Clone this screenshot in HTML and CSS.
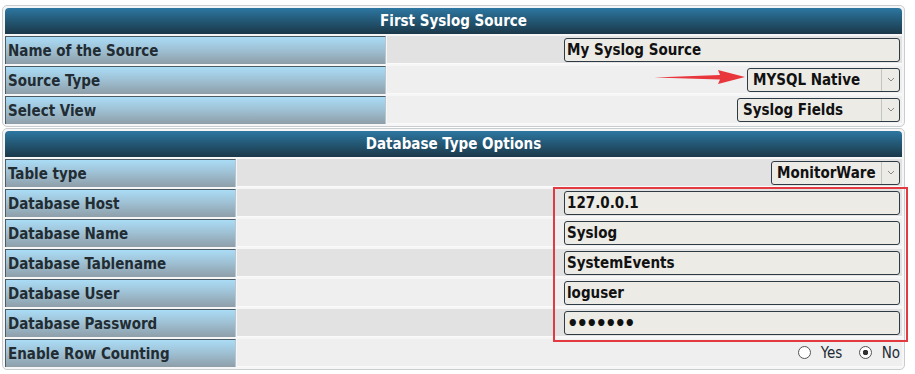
FILE: index.html
```html
<!DOCTYPE html>
<html lang="en">
<head>
    <meta charset="UTF-8">
    <title>Sources</title>
    <link rel="stylesheet" href="styles.css">
</head>
<body>
    <div class="page">
        <table class="cfg cfg-source">
            <tr><th colspan="2">First Syslog Source</th></tr>
            <tr class="odd">
                <td class="lbl">Name of the Source</td>
                <td class="val"><input class="txt" type="text" value="My Syslog Source"></td>
            </tr>
            <tr class="even">
                <td class="lbl">Source Type</td>
                <td class="val"><div class="sel sel-type"><span>MYSQL Native</span><i class="chev"><svg width="8" height="5" viewBox="0 0 8 5"><path d="M1 1l3 3 3-3" fill="none" stroke="#888" stroke-width="1"/></svg></i></div></td>
            </tr>
            <tr class="even">
                <td class="lbl">Select View</td>
                <td class="val"><div class="sel sel-view"><span>Syslog Fields</span><i class="chev"><svg width="8" height="5" viewBox="0 0 8 5"><path d="M1 1l3 3 3-3" fill="none" stroke="#888" stroke-width="1"/></svg></i></div></td>
            </tr>
        </table>

        <table class="cfg cfg-db">
            <tr><th colspan="2">Database Type Options</th></tr>
            <tr class="odd">
                <td class="lbl">Table type</td>
                <td class="val"><div class="sel sel-table"><span>MonitorWare</span><i class="chev"><svg width="8" height="5" viewBox="0 0 8 5"><path d="M1 1l3 3 3-3" fill="none" stroke="#888" stroke-width="1"/></svg></i></div></td>
            </tr>
            <tr class="odd">
                <td class="lbl">Database Host</td>
                <td class="val"><input class="txt" type="text" value="127.0.0.1"></td>
            </tr>
            <tr class="even">
                <td class="lbl">Database Name</td>
                <td class="val"><input class="txt" type="text" value="Syslog"></td>
            </tr>
            <tr class="odd">
                <td class="lbl">Database Tablename</td>
                <td class="val"><input class="txt" type="text" value="SystemEvents"></td>
            </tr>
            <tr class="even">
                <td class="lbl">Database User</td>
                <td class="val"><input class="txt" type="text" value="loguser"></td>
            </tr>
            <tr class="odd">
                <td class="lbl">Database Password</td>
                <td class="val"><input class="txt" type="password" value="1234567"></td>
            </tr>
            <tr class="even">
                <td class="lbl">Enable Row Counting</td>
                <td class="val">
                    <label class="radio"><span class="dot"></span>Yes</label>
                    <label class="radio"><span class="dot on"></span>No</label>
                </td>
            </tr>
        </table>

        <!-- annotations drawn over the screenshot -->
        <svg class="arrow" width="96" height="18" viewBox="0 0 96 18">
            <path d="M2 9.5 L68 7 L66 2 L93 9 L66 16 L68 11.5 Z" fill="#e8363c"/>
        </svg>
        <div class="mark"></div>
    </div>
</body>
</html>
```

FILE: styles.css
```css
body {
    margin: 0;
    background-color: #fff;
    font-family: "DejaVu Sans Condensed", "DejaVu Sans", Verdana, sans-serif;
    font-size: 15px;
    color: #1d2a33;
}
.page {
    position: relative;
    width: 903px;
    margin: 5px 0 0 2px;
}
.cfg {
    width: 100%;
    border: 1px solid #c9cdd0;
    border-radius: 5px;
    border-spacing: 1px 2px;
    padding: 0 1px;
    margin-bottom: 1px;
    background-color: #f6f6f6;
}
.cfg th {
    height: 26px;
    padding: 0;
    color: #fff;
    font-size: 15px;
    font-weight: bold;
    text-align: center;
    background: linear-gradient(#2d77a2, #245a78 45%, #1b3849);
    border-radius: 4px 4px 0 0;
}
.cfg td {
    height: 27px;
    padding: 0;
}
.lbl {
    padding-left: 2px !important;
    font-weight: bold;
    white-space: nowrap;
    color: #222c33;
    background: linear-gradient(#aadcf6, #9ebfd2 50%, #8e9ea8);
    border-top: 1px solid #4c5a64;
    border-left: 1px solid #4c5a64;
    border-right: 1px solid #b8c6cf;
}
.cfg-source .lbl {
    width: 377px;
}
.cfg-db .lbl {
    width: 227px;
}
.val {
    text-align: right;
    padding-right: 2px !important;
    border-bottom: 1px solid #fafafa;
}
.odd .val {
    background-color: #e2e2e2;
}
.even .val {
    background-color: #efefef;
}
.txt {
    box-sizing: border-box;
    width: 336px;
    height: 24px;
    margin: 0;
    padding: 0 2px;
    font-family: inherit;
    font-size: 15px;
    font-weight: bold;
    color: #111;
    background-color: #ecebe6;
    border: 1px solid #2e3a44;
    border-radius: 3px;
    vertical-align: middle;
}
.txt[type="password"] {
    font-size: 20px;
    letter-spacing: -2px;
}
.sel {
    box-sizing: border-box;
    display: inline-flex;
    align-items: stretch;
    height: 24px;
    font-size: 15px;
    font-weight: bold;
    color: #111;
    text-align: left;
    background-color: #ecebe6;
    border: 1px solid #2e3a44;
    border-radius: 3px;
    vertical-align: middle;
}
.sel span {
    flex: 1;
    padding-left: 5px;
    line-height: 22px;
}
.sel .chev {
    display: flex;
    align-items: center;
    justify-content: center;
    width: 17px;
    border-left: 1px solid #c4c4c4;
}
.sel-type {
    width: 153px;
}
.sel-view {
    width: 163px;
}
.sel-table {
    width: 129px;
}
.radio {
    display: inline-flex;
    align-items: center;
    margin-left: 12px;
    font-size: 15px;
    vertical-align: middle;
}
.radio .dot {
    box-sizing: border-box;
    width: 13px;
    height: 13px;
    margin-right: 10px;
    border: 1px solid #555;
    border-radius: 50%;
    background-color: #fff;
}
.radio .dot.on {
    background: radial-gradient(circle, #333 0 2.5px, #fff 3px);
}
.arrow {
    position: absolute;
    left: 650px;
    top: 63px;
}
.mark {
    position: absolute;
    left: 551px;
    top: 182px;
    width: 351px;
    height: 151px;
    border: 2px solid #e23a40;
}
```
